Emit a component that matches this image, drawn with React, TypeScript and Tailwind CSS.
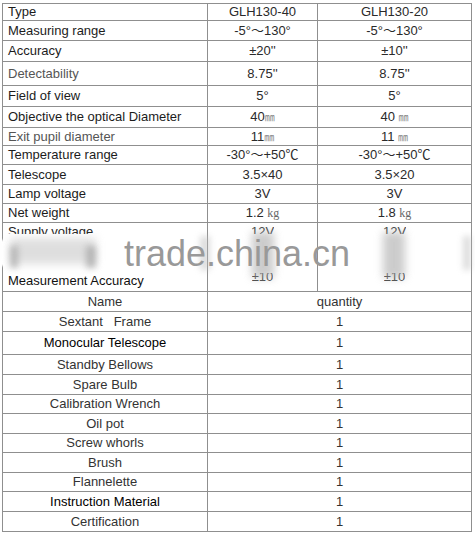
import React from "react";

type SpecRow = { label: string; a: React.ReactNode; b: React.ReactNode; h: string; dim?: boolean };

const mm = <span className="text-[10px] text-[#888]">㎜</span>;
const kg = <span className="text-[12px] text-[#666]" style={{ fontFamily: '"Liberation Serif", serif' }}>kg</span>;

const specs: SpecRow[] = [
  { label: "Type", a: "GLH130-40", b: "GLH130-20", h: "h-[17px]" },
  { label: "Measuring range", a: "-5°〜130°", b: "-5°〜130°", h: "h-[20px]" },
  { label: "Accuracy", a: "±20''", b: "±10''", h: "h-[21px]" },
  { label: "Detectability", a: "8.75''", b: "8.75''", h: "h-[24px]", dim: true },
  { label: "Field of view", a: "5°", b: "5°", h: "h-[21px]" },
  { label: "Objective the optical Diameter", a: <span>40{mm}</span>, b: <span className="whitespace-pre">40 {mm}</span>, h: "h-[21px]" },
  { label: "Exit pupil diameter", a: <span>11{mm}</span>, b: <span className="whitespace-pre">11 {mm}</span>, h: "h-[18px]", dim: true },
  { label: "Temperature range", a: "-30°〜+50℃", b: "-30°〜+50℃", h: "h-[19px]" },
  { label: "Telescope", a: "3.5×40", b: "3.5×20", h: "h-[20px]" },
  { label: "Lamp voltage", a: "3V", b: "3V", h: "h-[19px]" },
  { label: "Net weight", a: <span className="whitespace-pre">1.2 {kg}</span>, b: <span className="whitespace-pre">1.8 {kg}</span>, h: "h-[19px]" },
];

type Item = { name: string; h: string; strong?: boolean };

const items: Item[] = [
  { name: "Sextant   Frame", h: "h-[20px]" },
  { name: "Monocular Telescope", h: "h-[23px]", strong: true },
  { name: "Standby Bellows", h: "h-[20px]" },
  { name: "Spare Bulb", h: "h-[20px]" },
  { name: "Calibration Wrench", h: "h-[19px]" },
  { name: "Oil pot", h: "h-[20px]" },
  { name: "Screw whorls", h: "h-[19px]" },
  { name: "Brush", h: "h-[20px]" },
  { name: "Flannelette", h: "h-[19px]" },
  { name: "Instruction Material", h: "h-[20px]", strong: true },
  { name: "Certification", h: "h-[19px]" },
];

function TopClip({ children }: { children: React.ReactNode }) {
  return (
    <div className="h-[11px] overflow-hidden pt-[1px]">
      <div className="leading-[15px] whitespace-pre">{children}</div>
    </div>
  );
}

function BottomClip({ children }: { children: React.ReactNode }) {
  return (
    <div className="h-[11px] overflow-hidden">
      <div className="-mt-[4px] leading-[15px]">{children}</div>
    </div>
  );
}

export default function App() {
  return (
    <div
      className="relative w-[475px] h-[536px] bg-white pl-[2px] pt-[3px] text-[13px] text-[#222]"
      style={{ fontFamily: '"Liberation Sans", Arial, "Noto Sans CJK SC", sans-serif' }}
    >
      <div className="w-[470px] border border-[#8f8f8f]">
        {specs.map((r) => (
          <div key={r.label} className={`flex border-b border-[#8f8f8f] ${r.h}`}>
            <div className={`w-[205px] shrink-0 border-r border-[#8f8f8f] pl-[5px] flex items-center ${r.dim ? "text-[#555]" : "text-[#1c1c1c]"}`}>
              {r.label}
            </div>
            <div className="w-[110px] shrink-0 border-r border-[#8f8f8f] flex items-center justify-center text-[#2a2a2a]">
              {r.a}
            </div>
            <div className="flex-1 flex items-center justify-center text-[#2a2a2a]">{r.b}</div>
          </div>
        ))}

        {/* merged supply voltage / measurement accuracy row */}
        <div className="flex h-[69px] border-b border-[#8f8f8f]">
          <div className="w-[205px] shrink-0 border-r border-[#8f8f8f] pl-[5px] flex flex-col justify-between pb-[3px]">
            <TopClip>Supply voltage</TopClip>
            <div className="leading-[15px] text-[#111]">Measurement Accuracy</div>
          </div>
          <div className="w-[110px] shrink-0 border-r border-[#8f8f8f] flex flex-col items-center justify-between pb-[7px] text-[#444]">
            <TopClip>12V</TopClip>
            <BottomClip>±10</BottomClip>
          </div>
          <div className="flex-1 flex flex-col items-center justify-between pb-[7px] text-[#444]">
            <TopClip>12V</TopClip>
            <BottomClip>±10</BottomClip>
          </div>
        </div>

        <div className="flex h-[20px] border-b border-[#8f8f8f] text-[#333]">
          <div className="w-[205px] shrink-0 border-r border-[#8f8f8f] flex items-center justify-center">Name</div>
          <div className="flex-1 flex items-center justify-center">quantity</div>
        </div>
        {items.map((it, i) => (
          <div
            key={it.name}
            className={`flex ${it.h} ${i < items.length - 1 ? "border-b border-[#8f8f8f]" : ""}`}
          >
            <div
              className={`w-[205px] shrink-0 border-r border-[#8f8f8f] flex items-center justify-center whitespace-pre ${
                it.strong ? "text-black" : "text-[#333]"
              }`}
            >
              {it.name}
            </div>
            <div className="flex-1 flex items-center justify-center text-[#333]">1</div>
          </div>
        ))}
      </div>

      {/* watermark band */}
      <div className="absolute left-0 top-[240px] w-[5px] h-[26px] bg-white blur-[1px]" />
      <div className="absolute left-[10px] top-[238px] w-[86px] h-[26px] bg-[#c9c9c9] opacity-60 blur-[4px]" />
      <div className="absolute left-[10px] top-[246px] w-[8px] h-[22px] bg-[#999] opacity-60 blur-[3px]" />
      <div className="absolute left-[86px] top-[246px] w-[10px] h-[22px] bg-[#999] opacity-60 blur-[3px]" />
      <div className="absolute left-[200px] top-[236px] w-[10px] h-[34px] bg-[#bbb] opacity-50 blur-[3px]" />
      <div className="absolute left-[252px] top-[232px] w-[22px] h-[46px] bg-[#aaa] opacity-60 blur-[4px]" />
      <div className="absolute left-[383px] top-[232px] w-[22px] h-[46px] bg-[#aaa] opacity-60 blur-[4px]" />
      <div className="absolute left-[463px] top-[236px] w-[8px] h-[34px] bg-[#bbb] opacity-50 blur-[3px]" />
      <span className="absolute left-[124px] top-[236px] text-[36px] leading-[36px] text-[#999]">
        trade.china.cn
      </span>
    </div>
  );
}
